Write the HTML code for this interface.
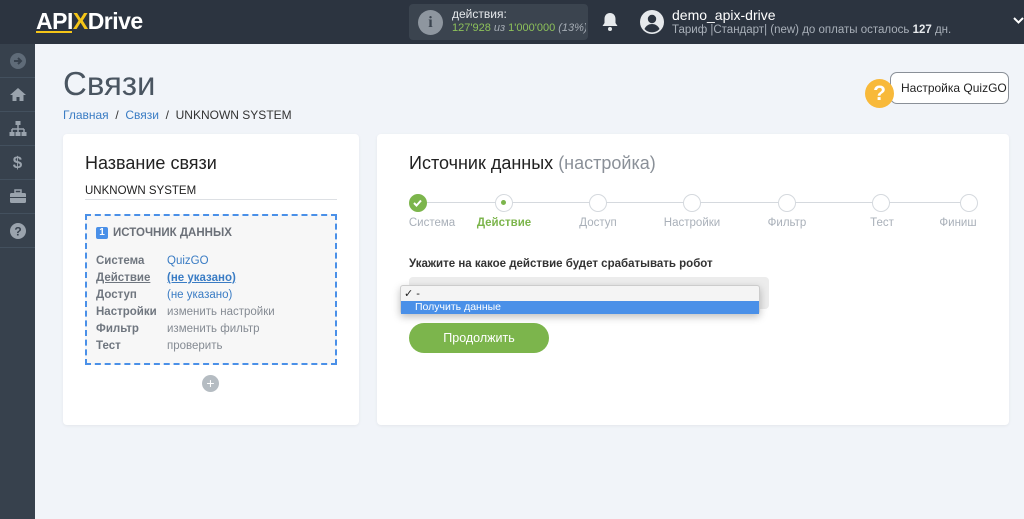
<!DOCTYPE html>
<html><head><meta charset="utf-8"><style>
*{margin:0;padding:0;box-sizing:border-box}
body{width:1024px;height:519px;overflow:hidden;background:#f1f4f9;font-family:"Liberation Sans",Arial,sans-serif;position:relative}
.hdr{position:absolute;left:0;top:0;width:1024px;height:44px;background:#2c3440}
.side{position:absolute;left:0;top:44px;width:35px;height:475px;background:#37414d}
.side div{height:34px;border-bottom:1px solid #43505e;display:flex;align-items:center;justify-content:center}
.abs{position:absolute}
.card{position:absolute;background:#fff;border-radius:4px;box-shadow:0 1px 3px rgba(0,0,0,.06)}
.st{position:absolute;top:194px;width:18px;height:18px;border-radius:50%;border:1.5px solid #d5d9de;background:#fff}
.sl{position:absolute;top:217px;font-size:11.5px;color:#a9b0b9;transform:translateX(-50%);white-space:nowrap}
.row{position:absolute;left:96px;font-size:11.5px;color:#6f767f;font-weight:bold;font-weight:600}
.row span{position:absolute;left:71px;white-space:nowrap;font-weight:normal;color:#858b93}
</style></head><body>
<div class="hdr">
 <div class="abs" style="left:36px;top:8px;font-size:23px;font-weight:bold;color:#fff;letter-spacing:-0.5px">API<span style="color:#f5c518">X</span>Drive</div>
 <div class="abs" style="left:36px;top:31px;width:36px;height:2px;background:#f5c518"></div>
 <div class="abs" style="left:409px;top:4px;width:179px;height:36px;background:#3b444f;border-radius:4px"></div>
 <div class="abs" style="left:418px;top:10px;width:25px;height:25px;border-radius:50%;background:#8e969f;color:#3b444f;font-weight:bold;font-size:16px;text-align:center;line-height:25px;font-family:'Liberation Serif',serif">i</div>
 <div class="abs" style="left:452px;top:7px;font-size:12px;color:#e6e9ec">действия:</div>
 <div class="abs" style="left:452px;top:22px;font-size:11px;color:#8dc15a;white-space:nowrap;width:134px;overflow:hidden">127'928 <i style="color:#a6adb5">из</i> 1'000'000 <i style="color:#a6adb5">(13%)</i></div>
 <svg class="abs" style="left:601px;top:12px" width="18" height="20" viewBox="0 0 18 20"><path d="M9 1c-3.5 0-5.5 2.5-5.5 6v4L1.5 14h15l-2-3V7C14.5 3.5 12.5 1 9 1z" fill="#e6e9ec"/><circle cx="9" cy="17" r="2" fill="#e6e9ec"/></svg>
 <svg class="abs" style="left:640px;top:10px" width="24" height="24" viewBox="0 0 24 24"><circle cx="12" cy="12" r="12" fill="#e6e9ec"/><circle cx="12" cy="9" r="4.2" fill="#2c3440"/><path d="M4.5 19c1.5-3.5 4.5-5 7.5-5s6 1.5 7.5 5a10 10 0 0 1-15 0z" fill="#2c3440"/></svg>
 <div class="abs" style="left:672px;top:7px;font-size:14px;color:#fff">demo_apix-drive</div>
 <div class="abs" style="left:672px;top:24px;font-size:11.5px;color:#a9b0b9;white-space:nowrap">Тариф |Стандарт| (new) до оплаты осталось <b style="color:#e6e9ec">127</b> дн.</div>
 <svg class="abs" style="left:1013px;top:17px" width="11" height="8"><path d="M1 1l4.5 4.5L10 1" stroke="#fff" stroke-width="2" fill="none"/></svg>
</div>
<div class="side">
 <div><svg width="16" height="16"><circle cx="8" cy="8" r="8" fill="#5f6b78"/><path d="M4 8h7M8 5l3 3-3 3" stroke="#37414d" stroke-width="2" fill="none"/></svg></div>
 <div><svg width="18" height="15"><path d="M9 1L1 8h2.5v6h4V10h3v4h4V8H17z" fill="#9aa3ad"/></svg></div>
 <div><svg width="18" height="16"><rect x="6.5" y="0" width="5" height="4" fill="#9aa3ad"/><path d="M9 4v4M3 8h12M3 8v3M9 8v3M15 8v3" stroke="#9aa3ad" stroke-width="1.5"/><rect x="0.5" y="11" width="5" height="4" fill="#9aa3ad"/><rect x="6.5" y="11" width="5" height="4" fill="#9aa3ad"/><rect x="12.5" y="11" width="5" height="4" fill="#9aa3ad"/></svg></div>
 <div style="color:#9aa3ad;font-weight:bold;font-size:17px">$</div>
 <div><svg width="18" height="15"><rect x="6" y="1" width="6" height="3" fill="none" stroke="#9aa3ad" stroke-width="1.5"/><rect x="1" y="4" width="16" height="10" rx="1.5" fill="#9aa3ad"/><path d="M1 8.5h16" stroke="#37414d"/></svg></div>
 <div><svg width="16" height="16"><circle cx="8" cy="8" r="8" fill="#9aa3ad"/><text x="8" y="12.5" font-size="12" font-weight="bold" fill="#37414d" text-anchor="middle" font-family="Liberation Sans">?</text></svg></div>
</div>
<div class="abs" style="left:63px;top:65px;font-size:33px;color:#4a5561">Связи</div>
<div class="abs" style="left:63px;top:108px;font-size:12px;color:#333;white-space:nowrap"><span style="color:#3a7cc4">Главная</span> &nbsp;/&nbsp; <span style="color:#3a7cc4">Связи</span> &nbsp;/&nbsp; UNKNOWN SYSTEM</div>
<div class="abs" style="left:890px;top:72px;width:119px;height:32px;border:1px solid #8a9098;border-radius:7px;background:#fff;font-size:12px;color:#222;line-height:30px;padding-left:10px">Настройка QuizGO</div>
<div class="abs" style="left:865px;top:79px;width:29px;height:29px;border-radius:50%;background:#f8b93a;color:#fff;font-weight:bold;font-size:21px;text-align:center;line-height:29px">?</div>

<div class="card" style="left:63px;top:134px;width:296px;height:291px"></div>
<div class="abs" style="left:85px;top:153px;font-size:18px;color:#222">Название связи</div>
<div class="abs" style="left:85px;top:185px;font-size:11.5px;color:#222">UNKNOWN SYSTEM</div>
<div class="abs" style="left:85px;top:199px;width:252px;height:1px;background:#dde0e4"></div>
<div class="abs" style="left:85px;top:214px;width:252px;height:151px;border:2px dashed #4a90e8;background:#f7f7f7"></div>
<div class="abs" style="left:96px;top:227px;width:12px;height:12px;background:#4a90e8;border-radius:2px;color:#fff;font-size:10px;font-weight:bold;text-align:center;line-height:12px">1</div>
<div class="abs" style="left:113px;top:227px;font-size:11.5px;font-weight:bold;color:#6b7078">ИСТОЧНИК ДАННЫХ</div>
<div class="row" style="top:255px">Система<span style="color:#3a7cc4">QuizGO</span></div>
<div class="row" style="top:272px"><u>Действие</u><span style="color:#3a7cc4;font-weight:bold;text-decoration:underline">(не указано)</span></div>
<div class="row" style="top:289px">Доступ<span style="color:#3a7cc4">(не указано)</span></div>
<div class="row" style="top:306px">Настройки<span>изменить настройки</span></div>
<div class="row" style="top:323px">Фильтр<span>изменить фильтр</span></div>
<div class="row" style="top:340px">Тест<span>проверить</span></div>
<div class="abs" style="left:202px;top:375px;width:17px;height:17px;border-radius:50%;background:#b5bcc2;color:#fff;text-align:center;line-height:17px;font-size:14px">+</div>

<div class="card" style="left:377px;top:134px;width:632px;height:291px"></div>
<div class="abs" style="left:409px;top:153px;font-size:18px;color:#222">Источник данных <span style="color:#8a9098">(настройка)</span></div>
<div class="abs" style="left:420px;top:202px;width:550px;height:1px;background:#d5d9de"></div>
<div class="st" style="left:409px;background:#7cb54c;border-color:#7cb54c"><svg width="15" height="15" style="position:absolute;left:0;top:0"><path d="M4 8l2.5 2.5L11 5.5" stroke="#fff" stroke-width="2" fill="none"/></svg></div>
<div class="st" style="left:495px"><div style="position:absolute;left:5px;top:5px;width:5px;height:5px;border-radius:50%;background:#7cb54c"></div></div>
<div class="st" style="left:589px"></div>
<div class="st" style="left:683px"></div>
<div class="st" style="left:778px"></div>
<div class="st" style="left:872px"></div>
<div class="st" style="left:960px"></div>
<div class="sl" style="left:432px">Система</div>
<div class="sl" style="left:504px;color:#7cb54c;font-weight:bold">Действие</div>
<div class="sl" style="left:598px">Доступ</div>
<div class="sl" style="left:692px">Настройки</div>
<div class="sl" style="left:787px">Фильтр</div>
<div class="sl" style="left:882px">Тест</div>
<div class="sl" style="left:958px">Финиш</div>
<div class="abs" style="left:409px;top:258px;font-size:11.5px;font-weight:bold;color:#333">Укажите на какое действие будет срабатывать робот</div>
<div class="abs" style="left:409px;top:277px;width:360px;height:32px;background:#ececec;border-radius:4px"></div>
<div class="abs" style="left:400px;top:285px;width:360px;height:29px;background:#f4f4f4;border:1px solid #ccc;border-radius:3px;box-shadow:0 3px 8px rgba(0,0,0,.25)"></div>
<div class="abs" style="left:404px;top:287px;font-size:11px;color:#222">✓ -</div>
<div class="abs" style="left:401px;top:301px;width:358px;height:13px;background:#4a90e8;color:#fff;font-size:10.5px;line-height:13px;padding-left:14px">Получить данные</div>
<div class="abs" style="left:409px;top:323px;width:140px;height:30px;border-radius:15px;background:#7cb54c;color:#fff;font-size:12.5px;text-align:center;line-height:30px">Продолжить</div>
</body></html>
